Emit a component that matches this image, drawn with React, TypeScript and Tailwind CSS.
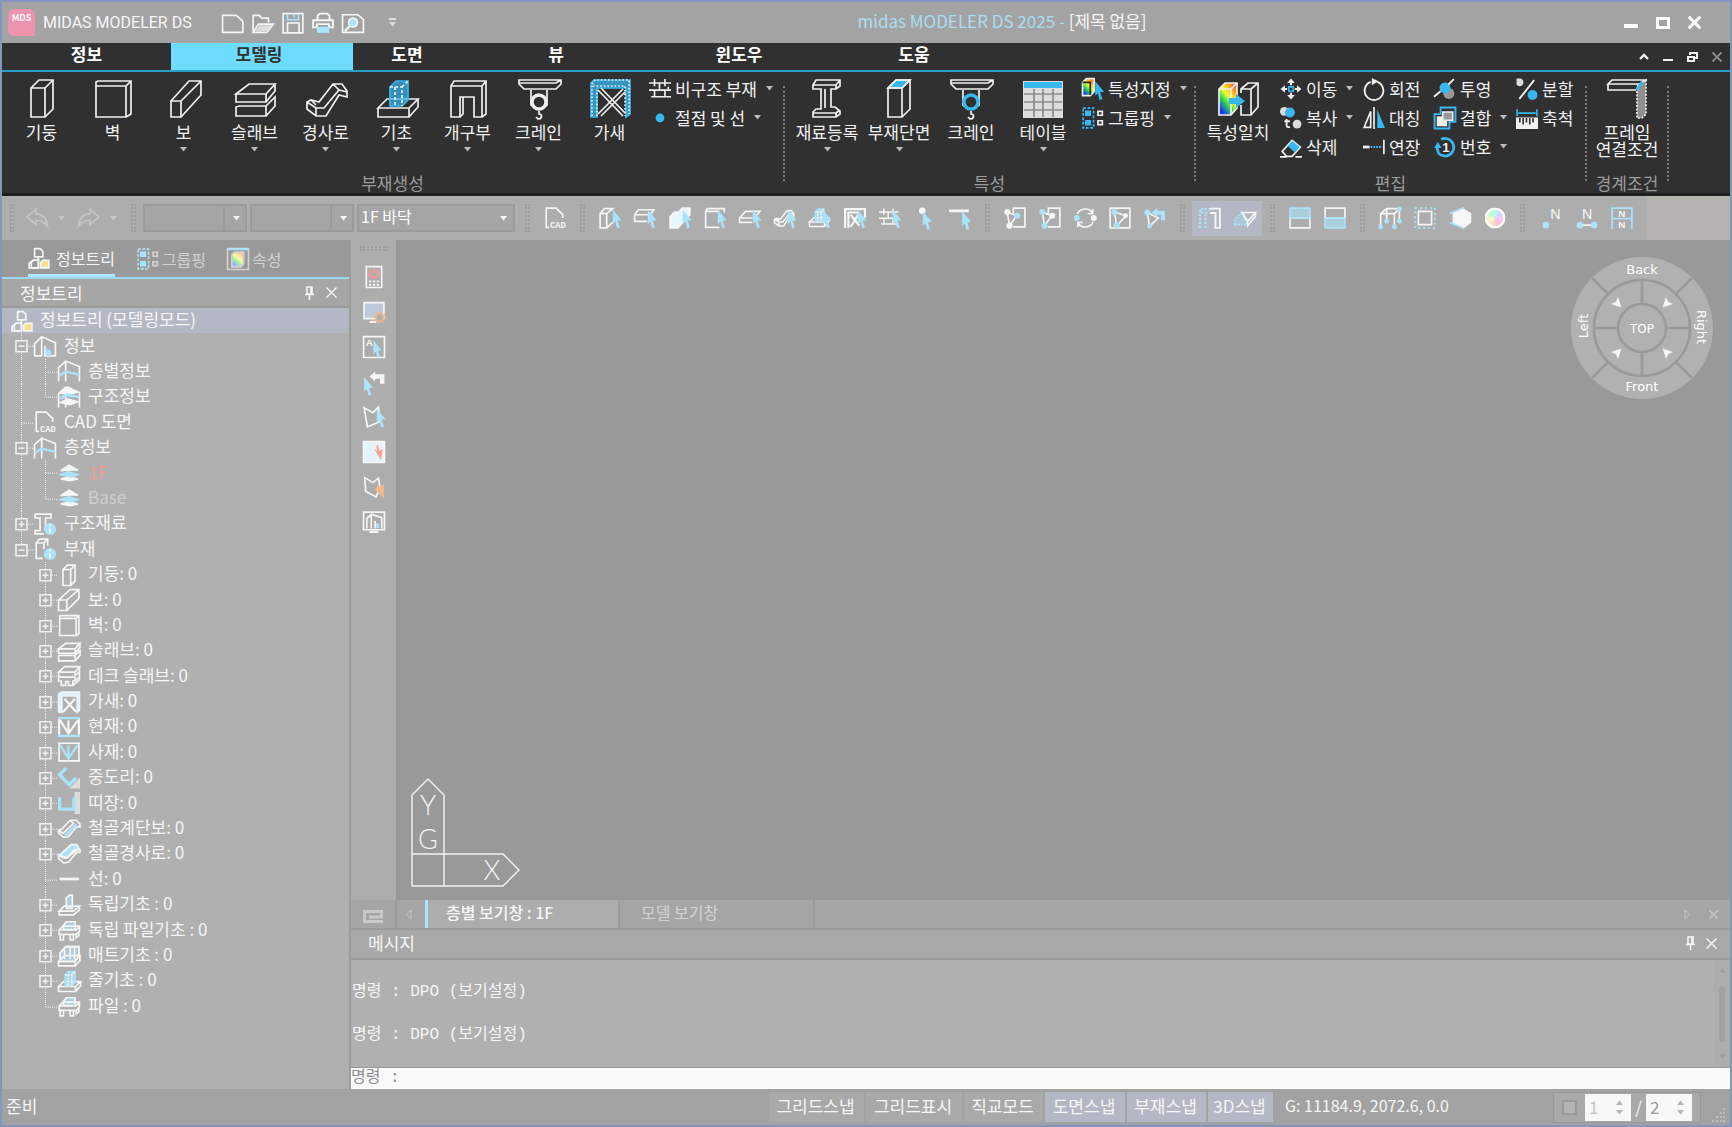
import { useState } from 'react';
import type { ReactNode } from 'react';

type Glyph = (a: string) => ReactNode;

const Rainbow = () => (
  <defs>
    <linearGradient id="rainbow" x1="1" y1="0" x2="0.3" y2="1">
      <stop offset="0" stopColor="#f33" />
      <stop offset="0.3" stopColor="#fb2" />
      <stop offset="0.5" stopColor="#ef3" />
      <stop offset="0.7" stopColor="#3d4" />
      <stop offset="1" stopColor="#13f" />
    </linearGradient>
  </defs>
);

// 40 x 40 member drawings, shared by the ribbon, the tree and the selection bar
const members: Record<string, Glyph> = {
  column: () => <path d="M9 10H23V39H9ZM9 10L17 2H31V31L23 39M23 10L31 2" />,
  wall: () => <path d="M3 8H33V39H3ZM3 8V4L5 3H38V36L33 39M33 8L38 3" />,
  beam: () => <path d="M7 23H17V39H7ZM7 23L25 3H37V17L17 39M17 23L37 3" />,
  beamWide: () => <path d="M1 20H16V39H1ZM1 20L22 1H38V17L16 39M16 20L38 1" />,
  slab: () => (
    <path d="M1 16L14 6H40L31 16ZM1 16V24H31V16M31 24L40 13V6M4 28L1 29V38H31V28H3M31 38L40 28V19L31 28" />
  ),
  deck: () => (
    <path d="M1 13L12 3H39L31 13ZM1 13V20L5 22H29L31 20V13M31 20L39 12V3M1 22V29H6V37H14V30H19V37H27V29H31V22M31 29L39 22V14M27 37L39 27V22" />
  ),
  ramp: () => (
    <path d="M1 24L5 22L13 24L27 6H36L41 13V19L33 17L20 38H10L1 31ZM1 24L10 30H18L33 12L41 14M27 6L33 12M10 30V38M5 22L10 27" />
  ),
  footing: (a) => (
    <>
      <path d="M1 30L10 21H41L32 30ZM1 30V39H32V30M32 39L41 29V21" />
      <path d="M13 9L19 3H31V22L25 28H13Z" fill={a} stroke={a} fillOpacity="0.7" />
      <path d="M13 9H25V28M25 9L31 3M18 9V27" strokeDasharray="3 2" />
    </>
  ),
  opening: () => <path d="M3 8L6 3H38V36L34 39H26V19H12V39H3ZM3 8H34V39M34 8L38 3M15 19V36L12 39" />,
  crane: () => (
    <>
      <path d="M0 2H42V6L37 11H5L0 6ZM0 5H37L42 2M12 12V27L17 31H23L28 27V12" />
      <circle cx="20" cy="24" r="7" strokeWidth="3.4" fill="#303030" />
      <path d="M20 33V36C24 36 23 41 19 41L17 39" />
    </>
  ),
  craneBlue: (a) => (
    <>
      <path d="M0 2H42V6L37 11H5L0 6ZM0 5H37L42 2M12 12V27L17 31H23L28 27V12" />
      <circle cx="20" cy="24" r="7" stroke={a} strokeWidth="3.4" fill="#303030" />
      <path d="M20 33V36C24 36 23 41 19 41L17 39" />
    </>
  ),
  brace: (a) => (
    <>
      <path d="M1 5L4 2H40V36L36 39V10H7V39H1Z" fill={a} stroke={a} fillOpacity="0.75" />
      <path d="M2 6L5 2H39V36M3 8H35V38M2 38V8M7 38V12" strokeDasharray="1.6 2" />
      <path d="M8 12L33 38M11 10L35 35M33 11L8 36M35 14L11 38" />
    </>
  ),
  bracePale: () => (
    <>
      <path d="M1 38V6L6 2H39V35L35 39V9H7V39Z" fill="#def1fa" stroke="#e9f6fc" />
      <path d="M9 38L14 33M33 38L29 33M12 14L31 36M31 14L11 36" strokeWidth="4" />
    </>
  ),
  steel: () => (
    <path d="M6 7L9 2H33V8L29 11H24V29H28L33 33V36L29 39H6V34L9 31H14V11H9L6 11ZM6 7H29V11M29 7L33 2M18 11V30M6 35H29V39M29 35L33 32" />
  ),
  section: (a) => (
    <>
      <path d="M9 10L17 2H31L23 10Z" fill={a} />
      <path d="M9 10H23V39H9ZM9 10L17 2H31V31L23 39M23 10L31 2" />
    </>
  ),
  table: (a) => (
    <>
      <rect x="0" y="3" width="40" height="37" fill="#ddd" stroke="none" />
      <rect x="1" y="4" width="38" height="6" fill={a} stroke="none" />
      <path d="M11 11V39M20 11V39M30 11V39M1 16H39M1 24H39M1 32H39" stroke="#8c8c8c" />
    </>
  ),
  match: (a) => (
    <>
      <Rainbow />
      <path d="M1 11L7 5H19V30L13 37H1Z" fill="url(#rainbow)" />
      <path d="M1 11H13V37M13 11L19 5M23 15V11L30 5H40V29L33 37H23V27M23 11H33V37M33 11L40 5" />
      <path d="M11 20H18V16L27 23L18 30V26H11Z" fill={a} stroke="none" />
    </>
  ),
  frame: (a) => (
    <>
      <path d="M1 6L5 2H38L33 6ZM1 6V12H29M33 6V12" />
      <path d="M30 8L39 2V36L35 40H30Z" fill="#8f8f8f" strokeDasharray="2 1.5" />
      <path d="M30 12L35 4" stroke={a} strokeWidth="3" />
    </>
  ),
  info: (a) => (
    <>
      <path d="M1 38V16L14 3L39 14V38H20V20M14 3V38M1 38H14" />
      <path d="M22 38V24L31 28V38Z" fill={a} stroke="none" />
    </>
  ),
  storey: (a) => (
    <>
      <path d="M1 39V14L14 2L39 12V39M14 2V39" />
      <path d="M1 29L14 21L39 27" stroke={a} strokeWidth="4.5" />
    </>
  ),
  structure: (a) => (
    <>
      <path d="M1 39V14L14 2L39 12V39M14 2V39" />
      <path d="M4 13L18 2L36 11L22 15ZM4 30L18 24L36 29L22 34Z" fill="currentColor" />
      <path d="M4 23L16 16L37 20" stroke={a} strokeWidth="5" />
    </>
  ),
  layers: (a) => (
    <>
      <path d="M5 16L20 6L36 15L24 14ZM5 31L20 27L36 31L22 34Z" fill="currentColor" />
      <path d="M5 23L19 18L36 23L24 27Z" fill={a} stroke={a} />
    </>
  ),
  steelInfo: (a) => (
    <>
      <path d="M2 2H31V9H21V28M2 2V9H11V32H2V38H18" />
      <circle cx="29" cy="29" r="11" fill={a} stroke="none" />
      <path d="M29 28V36M29 21V24" strokeWidth="3.5" />
    </>
  ),
  memberInfo: (a) => (
    <>
      <path d="M16 37H4V9H18V20M4 9L10 2H25V14M18 9L25 2" />
      <circle cx="29" cy="29" r="11" fill={a} stroke="none" />
      <path d="M29 28V36M29 21V24" strokeWidth="3.5" />
    </>
  ),
  chord: (a) => (
    <>
      <path d="M2 5V34M38 5V34M4 8L19 32L36 8M19 8V32" strokeWidth="4" />
      <path d="M0 4H40M0 36H40" stroke={a} strokeWidth="4" />
    </>
  ),
  diagonal: (a) => (
    <>
      <path d="M2 4V36M38 4V36M0 4H40M0 36H40" />
      <path d="M4 7L19 32L36 7M19 8V32" stroke={a} strokeWidth="4" />
    </>
  ),
  purlin: (a) => (
    <>
      <path d="M20 39L40 19V39Z" fill="#ddd" stroke="none" />
      <path d="M15 2L3 14L20 32L33 20" stroke={a} strokeWidth="6" />
    </>
  ),
  girt: (a) => (
    <>
      <path d="M30 0H40V40H30Z" fill="#ddd" stroke="none" />
      <path d="M3 10V31H29V10" stroke={a} strokeWidth="6" />
    </>
  ),
  stair: (a) => (
    <>
      <path d="M1 22L7 20L22 4H33L40 11V16H34L19 34L10 35L1 27ZM1 22L9 28L28 10L22 4" />
      <path d="M13 32L34 12" stroke={a} strokeWidth="6" />
    </>
  ),
  slope: (a) => (
    <>
      <path d="M3 22L24 3H34L38 10L16 27Z" fill={a} />
      <path d="M1 21L9 27H16L30 12H40V17H34L19 35L10 36L1 28Z" />
    </>
  ),
  line: () => <path d="M3 20H38" strokeWidth="5" />,
  pile: (a) => (
    <>
      <path d="M10 12L15 5H31V19H10Z" fill={a} fillOpacity="0.6" />
      <path d="M2 20L9 13H39V22L33 28H2ZM2 20H33L39 13M4 28V38H10V28M22 28V38H28V28M33 28V34L38 30V24" />
    </>
  ),
  mat: (a) => (
    <>
      <path d="M4 14L14 3H38V20L30 30H4Z" fill={a} fillOpacity="0.5" />
      <path d="M1 30L12 19H40L31 30ZM1 30V38H31V30M31 38L40 28V19M4 30V14L14 3H38V19M12 8V26M22 4V26M30 4V26" />
    </>
  ),
  padFooting: (a) => (
    <>
      <path d="M15 7L21 2H26V26H15Z" fill={a} fillOpacity="0.6" />
      <path d="M2 31L11 22H39L28 31ZM2 31V38H28L39 29V22" />
    </>
  ),
  cad: () => (
    <>
      <path d="M34 20V14L22 2H4V37H9" />
      <text x="11" y="39" fontSize="16" fontWeight="700" fill="currentColor" stroke="none" fontFamily="Liberation Mono, monospace">CAD</text>
    </>
  ),
  group: (a) => (
    <>
      <path d="M2 2H21V38H2Z" stroke={a} strokeDasharray="5 3" />
      <path d="M7 8H15V15H7ZM7 25H15V32H7Z" fill={a} stroke={a} />
      <path d="M29 8H37V15H29ZM29 25H37V32H29Z" />
    </>
  ),
  tree: () => (
    <>
      <path d="M12 3H22L27 8V18H12ZM19 18V24M10 24L6 28V38H19V24Z" />
      <path d="M23 38V28L27 24H38V38Z" fill="#ffe08a" />
      <path d="M2 38V30L9 24H19V38Z" />
    </>
  ),
  prop: (a) => (
    <>
      <Rainbow />
      <path d="M1 1H39V39H1Z" />
      <path d="M0 2H40" stroke={a} strokeWidth="4" />
      <path d="M9 12L14 8H30V29L25 34H9Z" fill="#fff" />
      <path d="M9 12L14 8H30V29L25 34H9Z" fill="url(#rainbow)" fillOpacity="0.45" />
    </>
  ),
  grid: () => <path d="M0 9H40M0 22H40M4 34H40M10 2V15M29 2V15M19 9V22M10 22V34M29 22V34M35 16V22" />,
};

const Cursor = ({ a }: { a: string }) => (
  <path d="M25 5V31L30 27L33 39L38 37L34 25L41 24Z" fill={a} stroke="none" />
);

const selectable = (name: string): Glyph => (a) => (
  <>
    <g transform="translate(0 1) scale(.88)">{members[name](a)}</g>
    <Cursor a={a} />
  </>
);

const tools: Record<string, Glyph> = {
  selColumn: (a) => (<><path d="M2 12H14V38H2ZM2 12L10 3H25L14 12M14 38L25 28" /><Cursor a={a} /></>),
  selBeam: (a) => (<><path d="M1 14L8 5H36L30 14M1 14V26H24M1 14H26" /><Cursor a={a} /></>),
  selSolid: (a) => (<><path d="M2 18L10 9H18L24 2H38V14L16 38H2Z" fill="#e6f6fc" /><Cursor a={a} /></>),
  selWall: (a) => (<><path d="M28 37H3V8L6 3H37V10M3 8H28" /><Cursor a={a} /></>),
  selSlab: (a) => (<><path d="M1 20L12 8H38L30 18M1 20V28H24M1 20H26" /><Cursor a={a} /></>),
  selRamp: selectable('ramp'),
  selFooting: selectable('footing'),
  selBrace: (a) => (<><path d="M2 38V4H38V20M8 38V10H28M12 14L28 34M26 14L12 36" strokeWidth="4" /><Cursor a={a} /></>),
  selGrid: selectable('grid'),
  selNode: (a) => (<><circle cx="15" cy="7" r="6" fill="currentColor" stroke="none" /><g transform="translate(-9 3)"><Cursor a={a} /></g></>),
  selLine: (a) => (<><path d="M0 7H36" strokeWidth="5" /><g transform="translate(-1 3)"><Cursor a={a} /></g></>),
  linkA: (a) => (<><path d="M17 12V2H38V36H16M6 9L10 34L23 16L6 9" /><circle cx="6" cy="9" r="4" fill="currentColor" /><circle cx="10" cy="34" r="4" fill="currentColor" /><circle cx="24" cy="16" r="4" fill={a} stroke={a} /></>),
  linkB: (a) => (<><path d="M17 12V2H38V36H16M6 9L10 34L23 16L6 9" /><circle cx="6" cy="9" r="4" fill={a} stroke={a} /><circle cx="10" cy="34" r="4" fill={a} stroke={a} /><circle cx="24" cy="16" r="4" fill="currentColor" /></>),
  rotate: (a) => (<><path d="M6 13A16 16 0 0 1 34 11M35 27A16 16 0 0 1 7 29M34 3V12H25M7 37V28H16" /><circle cx="5" cy="20" r="4" fill={a} stroke={a} /><circle cx="36" cy="20" r="4" fill="currentColor" /></>),
  boxLink: (a) => (<><path d="M2 2H38V38H2ZM10 9L14 34L31 16L10 9" /><circle cx="10" cy="9" r="4" fill={a} stroke={a} /><circle cx="14" cy="33" r="4" fill={a} stroke={a} /><circle cx="30" cy="16" r="3" fill="currentColor" /></>),
  undoLink: (a) => (<><path d="M6 10L10 35L26 20Z" /><circle cx="6" cy="10" r="4" fill={a} stroke={a} /><circle cx="10" cy="35" r="3" fill={a} stroke={a} /><path d="M14 10L24 2V7H38V24H31V14H24V19Z" fill={a} stroke="none" /></>),
  gate: (a) => (<><path d="M2 38V4H24M4 10H16M12 38V14" stroke={a} strokeDasharray="4 3" strokeWidth="4" /><path d="M20 3H38V38H30V11H20" strokeWidth="3.4" /></>),
  wedge: (a) => (<><path d="M1 32V24L14 9L24 32Z" stroke={a} fill={a} fillOpacity="0.3" strokeDasharray="4 2" /><path d="M14 10H39L25 26L14 10M39 10V17L25 34V26" /></>),
  topHalf: (a) => (<><path d="M2 20H38V38H2Z" /><rect x="2" y="2" width="36" height="18" fill={a} fillOpacity="0.6" stroke={a} /></>),
  bottomHalf: (a) => (<><path d="M2 2H38V20H2Z" /><rect x="2" y="20" width="36" height="18" fill={a} fillOpacity="0.6" stroke={a} /></>),
  nodes: (a) => (<><path d="M3 38V12L14 3H37V26M3 12H28L37 3M28 12V38M14 3V26" />{[[3, 36], [14, 26], [28, 36], [37, 26], [37, 4]].map(([x, y]) => <circle key={x + y * 50} cx={x} cy={y} r="3" fill={a} stroke={a} />)}</>),
  bounds: (a) => (<><path d="M8 8H32V32H8Z" /><path d="M2 2H38V38H2Z" stroke={a} strokeDasharray="3 6" strokeWidth="4" /></>),
  solid: (a) => (<><path d="M8 12L24 3L39 12V28L26 38L8 29Z" fill="currentColor" /><path d="M1 12L28 1M1 28L26 38" stroke={a} /></>),
  wheel: () => (
    <foreignObject x="1" y="1" width="38" height="38">
      <div className="h-full w-full rounded-full border-4 border-white bg-[conic-gradient(#bfe,#cdf,#ecf,#fbe,#fcc,#fec,#efc,#bfc,#bfe)]" />
    </foreignObject>
  ),
  n1: (a) => (<><circle cx="9" cy="33" r="6" fill={a} stroke="none" /><text x="17" y="21" fontSize="26" fill="currentColor" stroke="none" fontFamily="Liberation Sans, sans-serif">N</text></>),
  n2: (a) => (<><path d="M7 33H33" /><circle cx="7" cy="33" r="6" fill={a} stroke="none" /><circle cx="33" cy="33" r="6" fill={a} stroke="none" /><text x="11" y="21" fontSize="26" fill="currentColor" stroke="none" fontFamily="Liberation Sans, sans-serif">N</text></>),
  n3: (a) => (<><path d="M2 40V2H38V40M2 21H38" stroke={a} /><g fontSize="18" fontWeight="700" fill="currentColor" stroke="none" fontFamily="Liberation Sans, sans-serif"><text x="13" y="18">N</text><text x="13" y="38">N</text></g></>),
  undo: () => <path d="M2 18L18 4V12C32 13 38 22 39 35C33 26 27 24 18 24V32Z" />,
  redo: () => <path d="M38 18L22 4V12C8 13 2 22 1 35C7 26 13 24 22 24V32Z" />,
  remote: () => (<><path d="M6 1H34V39H6Z" /><path d="M14 8A8 8 0 1 0 26 8M20 4V13" stroke="#f49a9a" strokeWidth="4.4" /><path d="M11 28H30M11 34H30" strokeDasharray="4 3" strokeWidth="3.5" /></>),
  monitor: () => (<><path d="M2 3H38V32H2Z" fill="#c0c9dc" /><path d="M12 38H24" strokeWidth="4" /><circle cx="30" cy="30" r="7" stroke="#f2b48c" strokeWidth="3.5" fill="#b0b0b0" /><circle cx="30" cy="30" r="10" stroke="#f2b48c" strokeDasharray="3 4.8" strokeWidth="3" /></>),
  autoSel: (a) => (<><path d="M1 1H39V39H1Z" /><text x="5" y="19" fontSize="18" fontWeight="700" fill="currentColor" stroke="none" fontFamily="Liberation Sans, sans-serif">A</text><g transform="translate(-5 3) scale(.95)"><Cursor a={a} /></g></>),
  back: (a) => (<><g transform="translate(-23 6)"><Cursor a={a} /></g><path d="M12 10L22 1V6H39V23H31V14H22V19Z" fill="currentColor" stroke="none" /></>),
  polySel: (a) => (<><path d="M2 3L18 12L28 2L31 28L8 38Z" /><Cursor a={a} /></>),
  areaSel: () => (<><path d="M1 1H39V39H1Z" fill="#e4f4fc" /><path d="M20 14L33 35L36 14L30 18L27 7L24 9L26 18Z" fill="#fba48c" stroke="none" /></>),
  polyBack: () => (<><path d="M3 3L18 12L28 4L31 20L24 38L5 28Z" /><path d="M22 25L28 14V20L38 16V40Z" fill="#f7b988" stroke="none" /></>),
  screen: (a) => (<><path d="M1 2H39V34H1ZM7 32V14L15 6L34 12V32M15 6V32M22 32V18" /><path d="M24 22H29V31H24Z" fill={a} stroke="none" /><path d="M12 38H28" strokeWidth="4" /></>),
  assign: (a) => (<><Rainbow /><path d="M1 8L8 1H22V25L15 32H1Z" fill="url(#rainbow)" /><path d="M1 8H15V31" stroke="#222" /><g transform="translate(-1 1)"><Cursor a={a} /></g></>),
  dot: (a) => <circle cx="20" cy="20" r="8" fill={a} stroke="none" />,
  move: (a) => (<><path d="M20 1L27 9H13ZM20 39L27 31H13ZM1 20L9 13V27ZM39 20L31 13V27Z" fill="currentColor" stroke="none" /><path d="M20 8V13M20 27V32M8 20H13M27 20H32" strokeWidth="4" /><path d="M16 16H24V24H16Z" stroke={a} strokeWidth="3" /></>),
  copy: (a) => (<><circle cx="8" cy="8" r="8" fill="#ddd" stroke="none" /><circle cx="18" cy="10" r="9" fill={a} stroke="none" /><circle cx="31" cy="31" r="8" fill="#ddd" stroke="none" /><path d="M12 22V33C12 37 16 37 18 36M8 26H18" strokeWidth="3.4" /></>),
  erase: (a) => (<><path d="M4 28L22 8L37 20L22 37H12Z" /><path d="M14 18L22 9L36 20L27 30Z" fill={a} stroke="none" /><path d="M0 38H12M28 38H40" /></>),
  turn: () => (<><path d="M14 7A17 17 0 1 0 26 7" strokeWidth="3.4" /><path d="M16 0L28 6L16 13Z" fill="currentColor" stroke="none" /></>),
  mirror: (a) => (<><path d="M2 37H14V8ZM20 0V40" /><path d="M26 5V38H40Z" fill={a} stroke="none" /></>),
  extend: (a) => (<><path d="M0 20H12" strokeWidth="5" /><path d="M14 20H35" stroke={a} strokeWidth="4" strokeDasharray="3 2" /><path d="M38 7V33" /></>),
  project: (a) => (<><circle cx="27" cy="28" r="10" fill="#9a9a9a" stroke="none" /><circle cx="20" cy="18" r="10" fill={a} stroke="none" /><path d="M0 34L12 24M26 12L36 2" strokeWidth="3.4" /></>),
  merge: (a) => (<><path d="M12 1H39V27H28V39H1V13H12Z" stroke={a} strokeWidth="3.4" /><path d="M5 17H24V35H5Z" fill="#eee" stroke="none" /><path d="M16 9H34V24H16Z" fill="#999" stroke="#eee" /></>),
  number: (a) => (<><path d="M13 6A16 16 0 1 1 8 31M8 31L5 20" stroke={a} strokeWidth="5" /><path d="M0 22L7 11L14 22Z" fill={a} stroke="none" /><text x="15" y="29" fontSize="24" fontWeight="700" fill="currentColor" stroke="none" fontFamily="Liberation Sans, sans-serif">1</text></>),
  split: (a) => (<><path d="M1 1H8A7 7 0 1 1 1 12Z" fill="#ddd" stroke="none" /><path d="M6 38L33 4" strokeWidth="3.4" /><circle cx="30" cy="31" r="9" fill={a} stroke="none" /></>),
  ruler: (a) => (<><path d="M0 19H40V40H0Z" fill="currentColor" stroke="none" /><path d="M7 20V28M13 20V32M19 20V28M25 20V32M31 20V28" stroke="#333" /><path d="M2 4V17M38 4V17M4 11H36" stroke={a} strokeWidth="3" /></>),
  newFile: () => <path d="M1 6H26L38 17V37H1Z" />,
  openFile: () => (<><path d="M2 37V6H13L18 11H30V19M2 37L12 22H39L27 37Z" /><path d="M14 24H37L27 35H6Z" fill="#ddd" stroke="none" /></>),
  saveFile: (a) => (<><path d="M2 3H38V38H2Z M10 38V20H31V38" /><path d="M10 4V14H30V4M22 5V10" stroke={a} /></>),
  print: (a) => (<><path d="M10 13V7L14 3H28L32 7V13M2 15H38V28H31V22H9V28H2Z" strokeWidth="3.4" /><path d="M9 27H31V38H9Z" fill={a} stroke="none" /></>),
  preview: (a) => (<><path d="M1 5H29L39 14V37H1Z" /><circle cx="20" cy="19" r="8" fill={a} /><path d="M14 26L5 35" strokeWidth="4" /></>),
};

function Icon({ name, size = 22, accent = '#aae4fb' }: { name: string; size?: number; accent?: string }) {
  const draw = members[name] ?? tools[name];
  return (
    <svg
      aria-hidden="true"
      width={size}
      height={size}
      viewBox="0 0 40 40"
      fill="none"
      stroke="currentColor"
      strokeWidth={size > 30 ? 1.7 : 3}
      className="shrink-0 overflow-visible"
    >
      {draw(accent)}
    </svg>
  );
}

const Caret = () => (
  <svg aria-hidden="true" width="7" height="5" viewBox="0 0 7 5" className="shrink-0 fill-current">
    <path d="M0 0H7L3.5 4.5Z" />
  </svg>
);

const RIBBON_ACCENT = '#38b8f2';

function BigButton({ icon, label, caret }: { icon: string; label: string; caret?: boolean }) {
  return (
    <button className="flex flex-col items-center pt-[6px]">
      <Icon name={icon} size={40} accent={RIBBON_ACCENT} />
      <span className="mt-[5px] whitespace-pre-line leading-[17px]">{label}</span>
      {caret && <span className="mt-[7px] text-[#bdbdbd]"><Caret /></span>}
    </button>
  );
}

function SmallButton({ icon, label, caret }: { icon: string; label: string; caret?: boolean }) {
  return (
    <button className="flex h-[29px] items-center whitespace-nowrap">
      <Icon name={icon} accent={RIBBON_ACCENT} />
      <span className="ml-1 leading-5">{label}</span>
      {caret && <span className="ml-[9px] text-[#bdbdbd]"><Caret /></span>}
    </button>
  );
}

function RibbonGroup({ title, className, children }: { title: string; className: string; children: ReactNode }) {
  return (
    <>
      <section className={`flex shrink-0 flex-col ${className}`}>
        <div className="flex flex-1">{children}</div>
        <h2 className="text-center leading-5 text-[#9c9c9c]">{title}</h2>
      </section>
      <div className="mt-[14px] mb-3 border-l-2 border-dotted border-[#7c7c7c]" />
    </>
  );
}

const ribbonTabs = [
  { label: '정보', width: 'w-[169px]' },
  { label: '모델링', width: 'w-[182px]' },
  { label: '도면', width: 'w-[108px]' },
  { label: '뷰', width: 'w-[190px]' },
  { label: '윈도우', width: 'w-[176px]' },
  { label: '도움', width: 'w-[174px]' },
];

const memberButtons = [
  { icon: 'column', label: '기둥' },
  { icon: 'wall', label: '벽' },
  { icon: 'beam', label: '보', caret: true },
  { icon: 'slab', label: '슬래브', caret: true },
  { icon: 'ramp', label: '경사로', caret: true },
  { icon: 'footing', label: '기초', caret: true },
  { icon: 'opening', label: '개구부', caret: true },
  { icon: 'crane', label: '크레인', caret: true },
  { icon: 'brace', label: '가새' },
];

const propertyButtons = [
  { icon: 'steel', label: '재료등록', caret: true },
  { icon: 'section', label: '부재단면', caret: true },
  { icon: 'craneBlue', label: '크레인' },
  { icon: 'table', label: '테이블', caret: true },
];

type Guide = 'none' | 'line' | 'tee' | 'end' | 'plus' | 'minus' | 'minusEnd';

interface TreeItem {
  label: string;
  icon: string;
  guides: Guide[];
  color?: string;
}

const treeItems: TreeItem[] = [
  { label: '정보', icon: 'info', guides: ['minus'] },
  { label: '층별정보', icon: 'storey', guides: ['line', 'tee'] },
  { label: '구조정보', icon: 'structure', guides: ['line', 'end'] },
  { label: 'CAD 도면', icon: 'cad', guides: ['tee'] },
  { label: '층정보', icon: 'storey', guides: ['minus'] },
  { label: '1F', icon: 'layers', guides: ['line', 'tee'], color: 'text-[#f59a8c]' },
  { label: 'Base', icon: 'layers', guides: ['line', 'end'], color: 'text-[#cfcfcf]' },
  { label: '구조재료', icon: 'steelInfo', guides: ['plus'] },
  { label: '부재', icon: 'memberInfo', guides: ['minusEnd'] },
  { label: '기둥: 0', icon: 'column', guides: ['none', 'plus'] },
  { label: '보: 0', icon: 'beamWide', guides: ['none', 'plus'] },
  { label: '벽: 0', icon: 'wall', guides: ['none', 'plus'] },
  { label: '슬래브: 0', icon: 'slab', guides: ['none', 'plus'] },
  { label: '데크 슬래브: 0', icon: 'deck', guides: ['none', 'plus'] },
  { label: '가새: 0', icon: 'bracePale', guides: ['none', 'plus'] },
  { label: '현재: 0', icon: 'chord', guides: ['none', 'plus'] },
  { label: '사재: 0', icon: 'diagonal', guides: ['none', 'plus'] },
  { label: '중도리: 0', icon: 'purlin', guides: ['none', 'plus'] },
  { label: '띠장: 0', icon: 'girt', guides: ['none', 'plus'] },
  { label: '철골계단보: 0', icon: 'stair', guides: ['none', 'plus'] },
  { label: '철골경사로: 0', icon: 'slope', guides: ['none', 'plus'] },
  { label: '선: 0', icon: 'line', guides: ['none', 'tee'] },
  { label: '독립기초 : 0', icon: 'padFooting', guides: ['none', 'plus'] },
  { label: '독립 파일기초 : 0', icon: 'pile', guides: ['none', 'plus'] },
  { label: '매트기초 : 0', icon: 'mat', guides: ['none', 'plus'] },
  { label: '줄기초 : 0', icon: 'footing', guides: ['none', 'plus'] },
  { label: '파일 : 0', icon: 'pile', guides: ['none', 'end'] },
];

function GuideCell({ kind }: { kind: Guide }) {
  const boxed = kind === 'plus' || kind === 'minus' || kind === 'minusEnd';
  const stops = kind === 'end' || kind === 'minusEnd';
  const art = (
    <svg aria-hidden="true" className="block h-full w-6 overflow-visible" stroke="#f0f0f0" fill="none">
      {kind !== 'none' && (
        <line x1="11.5" y1="0" x2="11.5" y2={stops ? '50%' : '100%'} strokeDasharray="1 1" />
      )}
      {kind !== 'none' && kind !== 'line' && (
        <svg y="50%" className="overflow-visible">
          <path d="M12 .5H24" strokeDasharray="1 1" />
          {boxed && <path d="M6 -5H17V6H6Z" fill="#b0b0b0" strokeWidth="1.6" />}
          {boxed && <path d={kind === 'plus' ? 'M8.5 .5H14.5M11.5 -2.5V3.5' : 'M8.5 .5H14.5'} strokeWidth="1.6" />}
        </svg>
      )}
    </svg>
  );
  return boxed ? <button aria-label="확장" className="h-full">{art}</button> : art;
}

const Grip = () => (
  <div className="flex w-5 shrink-0 justify-center">
    <div className="h-7 w-[5px] border-x-2 border-dotted border-[#9c9c9c]" />
  </div>
);

function ToolGroup({ icons, active }: { icons: string[]; active?: boolean }) {
  return (
    <div className={`flex h-[35px] ${active ? 'bg-[#b4b8c5]' : ''}`}>
      {icons.map((name) => (
        <button key={name} aria-label={name} className="flex w-[35px] items-center justify-center">
          <Icon name={name} />
        </button>
      ))}
    </div>
  );
}

function Combo({ label, value, className, divided }: { label: string; value: string; className: string; divided?: boolean }) {
  return (
    <div className={`relative h-7 ${className}`}>
      <select
        aria-label={label}
        className="h-full w-full appearance-none border-2 border-[#9b9b9b] bg-[#a5a5a5] pb-1 pl-[2px] text-base leading-5 text-white"
      >
        <option>{value}</option>
      </select>
      <span
        className={`pointer-events-none absolute inset-y-0 right-0 flex w-6 items-center justify-center ${
          divided ? 'border-l-2 border-[#9b9b9b]' : ''
        }`}
      >
        <Caret />
      </span>
    </div>
  );
}

const Pin = () => (
  <svg aria-hidden="true" width="11" height="14" viewBox="0 0 11 14" fill="none" stroke="currentColor" strokeWidth="1.6">
    <path d="M3 1H8V8H3ZM1 8.5H10M5.5 9V14M7 1V8" />
  </svg>
);

const Cross = ({ size = 11, width = 1.4 }: { size?: number; width?: number }) => (
  <svg aria-hidden="true" width={size} height={size} viewBox="0 0 11 11" fill="none" stroke="currentColor" strokeWidth={width}>
    <path d="M.5 .5L10.5 10.5M10.5 .5L.5 10.5" />
  </svg>
);

function Compass() {
  return (
    <svg aria-label="뷰 큐브" width="142" height="142" viewBox="-71 -71 142 142" className="absolute top-[17px] right-[17px]">
      <circle r="71" fill="#b1b1b1" />
      <g fill="none" stroke="#999" strokeWidth="2.5">
        <circle r="48" />
        <circle r="24" />
        <path d="M0 -48V-24M0 24V48M-48 0H-24M24 0H48M-50 -50L-34 -34M50 -50L34 -34M-50 50L-34 34M50 50L34 34" />
      </g>
      <g fill="#f4f4f4">
        {[45, 135, 225, 315].map((deg) => (
          <path key={deg} d="M0 -29L5 -39L0 -37L-5 -39Z" transform={`rotate(${deg})`} />
        ))}
      </g>
      <g fill="#fff" fontSize="13" textAnchor="middle" fontFamily="DejaVu Sans, sans-serif">
        <text y="-54">Back</text>
        <text y="63">Front</text>
        <text y="5" fontSize="12">TOP</text>
        <text transform="translate(-54 -2) rotate(-90)">Left</text>
        <text transform="translate(55 -1) rotate(90)">Right</text>
      </g>
    </svg>
  );
}

function AxisMark() {
  return (
    <svg aria-hidden="true" width="109" height="109" viewBox="0 0 109 109" className="absolute bottom-[13px] left-[15px]" fill="none" stroke="#f4f4f4" strokeWidth="1.4">
      <path d="M1 108V17L17 1L33 17V108M1 76H92L108 92L92 108H1" />
      <g fill="#f4f4f4" stroke="none" textAnchor="middle" fontFamily="Lato, sans-serif" fontWeight="300" fontSize="27">
        <text x="17" y="37">Y</text>
        <text x="17" y="71">G</text>
        <text x="81" y="102">X</text>
      </g>
    </svg>
  );
}

const snaps = [
  { label: '그리드스냅', on: false, width: 'w-[95px]' },
  { label: '그리드표시', on: false, width: 'w-[96px]' },
  { label: '직교모드', on: false, width: 'w-[79px]' },
  { label: '도면스냅', on: true, width: 'w-[80px]' },
  { label: '부재스냅', on: true, width: 'w-[79px]' },
  { label: '3D스냅', on: true, width: 'w-[65px]' },
];

function PageBox({ label, value, disabled }: { label: string; value: number; disabled?: boolean }) {
  return (
    <div className="flex h-[27px] w-[46px] items-center bg-[#f8f8f8] text-[#999]">
      <input
        aria-label={label}
        defaultValue={value}
        disabled={disabled}
        className={`w-[31px] bg-transparent pl-1 outline-none ${disabled ? 'text-[#c4c4c4]' : ''}`}
      />
      <span className="flex flex-col gap-[5px] text-[#b4b4b4]">
        <span className="rotate-180"><Caret /></span>
        <Caret />
      </span>
    </div>
  );
}

export default function App() {
  const [tab, setTab] = useState('모델링');

  return (
    <div className="flex min-h-screen flex-col border-2 border-[#8296be] bg-[#a3a3a3] font-['Noto_Sans_CJK_KR',sans-serif] text-[17px] leading-5 text-[#f6f6f6]">
      <header className="flex h-[41px] items-center bg-[#a3a3a3]">
        <div className="flex w-[400px] items-center">
          <div className="ml-[6px] flex h-[27px] w-[27px] items-start justify-center rounded-md rounded-br-none bg-[#ec93ad] pt-[3px] text-[9px] leading-3 font-bold">
            MDS
          </div>
          <span className="ml-2 w-[179px] font-['Roboto',sans-serif] text-base">MIDAS MODELER DS</span>
          <div className="flex gap-[8px]">
            {['newFile', 'openFile', 'saveFile', 'print', 'preview'].map((name) => (
              <button key={name} aria-label={name}><Icon name={name} /></button>
            ))}
          </div>
          <button aria-label="빠른 실행" className="ml-[25px] flex flex-col items-center gap-[2px] text-[#dedede]">
            <span className="h-[2px] w-[7px] bg-current" />
            <Caret />
          </button>
        </div>
        <h1 className="flex-1 pb-1 text-center">
          <span className="text-[#a9def2]">midas MODELER DS 2025 - </span>[제목 없음]
        </h1>
        <div className="flex w-[128px] items-center gap-[18px] pl-[22px]">
          <button aria-label="최소화" className="mt-[6px] h-1 w-[14px] bg-white" />
          <button aria-label="최대화" className="h-3 w-[14px] border-[3px] border-white" />
          <button aria-label="닫기"><Cross size={13} width={2.8} /></button>
        </div>
      </header>

      <div className="bg-[#303030] text-[#f0f0f0]">
        <nav className="flex h-[29px] border-b-2 border-[#2a9dc4]">
          {ribbonTabs.map(({ label, width }) => (
            <button
              key={label}
              onClick={() => setTab(label)}
              className={`${width} pb-[6px] font-bold ${tab === label ? 'bg-[#6edcff] pr-[6px] text-[#303030]' : 'text-white'}`}
            >
              {label}
            </button>
          ))}
          <div className="ml-auto flex items-center gap-[14px] pr-2">
            <button aria-label="리본 접기">
              <svg width="10" height="7" viewBox="0 0 10 7" fill="none" stroke="currentColor" strokeWidth="2.4"><path d="M1 6L5 2L9 6" /></svg>
            </button>
            <button aria-label="창 최소화" className="mt-[6px] h-[2px] w-[10px] bg-current" />
            <button aria-label="창 복원">
              <svg width="11" height="10" viewBox="0 0 11 10" fill="none" stroke="currentColor" strokeWidth="2"><path d="M1 5H7V9H1ZM3 3V1H10V6H8" /></svg>
            </button>
            <button aria-label="창 닫기" className="text-[#8f8f8f]"><Cross size={10} width={2} /></button>
          </div>
        </nav>

        <div className="flex h-[124px] border-b-[3px] border-[#1d1d1d]">
          <RibbonGroup title="부재생성" className="w-[781px]">
            <div className="ml-1 grid grid-cols-[repeat(9,71px)]">
              {memberButtons.map((b) => <BigButton key={b.label} {...b} />)}
            </div>
            <div className="ml-1 flex flex-col pt-[2px]">
              <SmallButton icon="grid" label="비구조 부재" caret />
              <SmallButton icon="dot" label="절점 및 선" caret />
            </div>
          </RibbonGroup>
          <RibbonGroup title="특성" className="w-[409px]">
            <div className="ml-[6px] grid grid-cols-[repeat(4,72px)]">
              {propertyButtons.map((b) => <BigButton key={b.label} {...b} />)}
            </div>
            <div className="ml-[3px] flex flex-col pt-[2px]">
              <SmallButton icon="assign" label="특성지정" caret />
              <SmallButton icon="group" label="그룹핑" caret />
            </div>
          </RibbonGroup>
          <RibbonGroup title="편집" className="w-[389px]">
            <div className="ml-[6px] grid grid-cols-[72px]">
              <BigButton icon="match" label="특성일치" />
            </div>
            <div className="ml-[6px] grid grid-cols-[83px_71px_82px_60px] grid-rows-[29px_29px_29px] pt-[2px]">
              <SmallButton icon="move" label="이동" caret />
              <SmallButton icon="turn" label="회전" />
              <SmallButton icon="project" label="투영" />
              <SmallButton icon="split" label="분할" />
              <SmallButton icon="copy" label="복사" caret />
              <SmallButton icon="mirror" label="대칭" />
              <SmallButton icon="merge" label="결합" caret />
              <SmallButton icon="ruler" label="축척" />
              <SmallButton icon="erase" label="삭제" />
              <SmallButton icon="extend" label="연장" />
              <SmallButton icon="number" label="번호" caret />
            </div>
          </RibbonGroup>
          <RibbonGroup title="경계조건" className="w-[80px]">
            <div className="mx-auto">
              <BigButton icon="frame" label={'프레임\n연결조건'} />
            </div>
          </RibbonGroup>
        </div>
      </div>

      <div className="flex h-[44px] bg-[#b5b3b0]">
        <div className="flex items-center bg-[#adadad] pr-2">
          <div className="w-3 overflow-hidden"><Grip /></div>
          <div className="flex items-center gap-[13px] pl-3 text-[#c6c6c6]">
            <div className="flex items-center gap-[10px]">
              <button aria-label="실행 취소"><Icon name="undo" /></button>
              <Caret />
            </div>
            <div className="flex items-center gap-[10px]">
              <button aria-label="다시 실행"><Icon name="redo" /></button>
              <Caret />
            </div>
          </div>
          <div className="ml-[6px]"><Grip /></div>
          <div className="flex gap-[3px]">
            <Combo label="그룹" value="" className="w-[104px]" divided />
            <Combo label="필터" value="" className="w-[104px]" divided />
            <Combo label="층" value="1F 바닥" className="w-[158px]" />
          </div>
          <div className="ml-[2px]"><Grip /></div>
          <ToolGroup icons={['cad']} />
          <Grip />
          <ToolGroup
            icons={['selColumn', 'selBeam', 'selSolid', 'selWall', 'selSlab', 'selRamp', 'selFooting', 'selBrace', 'selGrid', 'selNode', 'selLine']}
          />
          <Grip />
          <ToolGroup icons={['linkA', 'linkB', 'rotate', 'boxLink', 'undoLink']} />
          <Grip />
          <ToolGroup icons={['gate', 'wedge']} active />
          <Grip />
          <ToolGroup icons={['topHalf', 'bottomHalf']} />
          <Grip />
          <ToolGroup icons={['nodes', 'bounds', 'solid', 'wheel']} />
          <div className="mr-[2px]"><Grip /></div>
          <ToolGroup icons={['n1', 'n2', 'n3']} />
        </div>
      </div>

      <main className="flex flex-1">
        <aside className="flex w-[349px] shrink-0 flex-col border-r-2 border-[#9b9b9b] bg-[#b0b0b0]">
          <div className="flex h-[39px] items-center border-b-2 border-[#9fd8ee] bg-[#999] text-base">
            <div className="w-[18px] overflow-hidden"><Grip /></div>
            <button className="ml-2 flex h-full items-center border-b-[3px] border-[#a9e6ff] pt-[2px]">
              <Icon name="tree" /><span className="ml-[6px]">정보트리</span>
            </button>
            <button className="ml-[22px] flex items-center text-[#d2d2d2]">
              <Icon name="group" /><span className="ml-[3px]">그룹핑</span>
            </button>
            <button className="ml-[21px] flex items-center text-[#d2d2d2]">
              <Icon name="prop" /><span className="ml-[3px]">속성</span>
            </button>
          </div>
          <div className="flex h-[29px] items-center border-b-2 border-[#9b9b9b] bg-[#a6a6a6] pr-3 pl-[18px]">
            <h2 className="flex-1">정보트리</h2>
            <button aria-label="고정"><Pin /></button>
            <button aria-label="닫기" className="ml-[11px]"><Cross /></button>
          </div>
          <div className="grid h-[711px] auto-rows-fr">
            <div className="flex items-center bg-[#b4b8c5] pl-[9px]">
              <Icon name="tree" />
              <span className="ml-[7px] pb-[3px]">정보트리 (모델링모드)</span>
            </div>
            {treeItems.map(({ label, icon, guides, color }) => (
              <div key={label} className="flex min-h-0 items-center pl-2">
                {guides.map((g, i) => <GuideCell key={i} kind={g} />)}
                <Icon name={icon} />
                <span className={`ml-2 pb-[3px] ${color ?? ''}`}>{label}</span>
              </div>
            ))}
          </div>
        </aside>

        <div className="flex min-w-0 flex-1 flex-col">
          <div className="flex flex-1">
            <div className="flex w-[45px] flex-col items-center bg-[#adadad] pt-[6px]">
              <div className="mb-[8px] h-[5px] w-7 border-y-2 border-dotted border-[#9c9c9c]" />
              {['remote', 'monitor', 'autoSel', 'back', 'polySel', 'areaSel', 'polyBack', 'screen'].map((name) => (
                <button key={name} aria-label={name} className="flex h-[35px] w-[35px] items-center justify-center">
                  <Icon name={name} />
                </button>
              ))}
            </div>
            <div className="relative flex-1 bg-[#999]">
              <Compass />
              <AxisMark />
            </div>
          </div>

          <div className="flex h-[30px] border-b-2 border-[#9b9b9b] bg-[#a5a5a5] text-base">
            <button aria-label="목록" className="flex w-[46px] items-center justify-center border-r-2 border-[#9b9b9b] pt-1 text-[#c9c9c9]">
              <svg width="20" height="13" viewBox="0 0 20 13" fill="none" stroke="currentColor" strokeWidth="3"><path d="M20 11.5H1.5V1.5H18.5V7H6" /></svg>
            </button>
            <button aria-label="이전" className="flex w-[28px] items-center justify-center pr-[6px] text-[#c4c4c4]">
              <svg width="7" height="11" viewBox="0 0 7 11" fill="none" stroke="currentColor"><path d="M6 1V10L1 5.5Z" /></svg>
            </button>
            <button className="flex w-[195px] items-center border-r-2 border-l-[3px] border-r-[#9b9b9b] border-l-[#a9e6ff] bg-[#adadad] pb-1 pl-[18px] font-medium">
              층별 보기창 : 1F
            </button>
            <button className="flex w-[195px] items-center border-r-2 border-[#9b9b9b] pb-1 pl-[21px] text-[#d4d4d4]">모델 보기창</button>
            <div className="ml-auto flex items-center gap-[18px] pr-3 text-[#c4c4c4]">
              <button aria-label="다음">
                <svg width="7" height="11" viewBox="0 0 7 11" fill="none" stroke="currentColor"><path d="M1 1V10L6 5.5Z" /></svg>
              </button>
              <button aria-label="보기창 닫기"><Cross size={9} width={2} /></button>
            </div>
          </div>

          <div className="flex h-[30px] items-center border-b-2 border-[#9b9b9b] bg-[#a8a8a8] pr-[13px] pb-[2px] pl-[17px]">
            <h2 className="flex-1">메시지</h2>
            <button aria-label="메시지 고정"><Pin /></button>
            <button aria-label="메시지 닫기" className="ml-[10px]"><Cross /></button>
          </div>
          <div className="flex h-[108px] border-b border-[#999] bg-[#b0b0b0]">
            <div className="flex-1 pt-[10px] pl-[1px] font-['Liberation_Mono','Noto_Sans_CJK_KR',monospace] text-base">
              <p className="mt-3 leading-5">명령 : DPO (보기설정)</p>
              <p className="mt-[23px] leading-5">명령 : DPO (보기설정)</p>
            </div>
            <div className="flex w-4 flex-col items-center justify-between bg-[#adadad] py-2 text-[#9f9f9f]">
              <span className="rotate-180"><Caret /></span>
              <span className="h-14 w-[6px] rounded bg-[#a2a2a2]" />
              <Caret />
            </div>
          </div>
          <label className="flex h-[21px] items-start bg-[#fafafa] font-['Liberation_Mono','Noto_Sans_CJK_KR',monospace] text-base leading-5 text-[#8c8c8c]">
            명령 :
            <input className="ml-2 min-w-0 flex-1 bg-transparent outline-none" />
          </label>
        </div>
      </main>

      <footer className="flex h-[36px] items-center bg-[#a2a2a2]">
        <span className="pb-[3px] pl-1">준비</span>
        <div className="ml-auto flex h-[30px] gap-[2px]">
          {snaps.map(({ label, on, width }) => (
            <button key={label} className={`${width} pr-[6px] pb-[2px] pl-1 text-center whitespace-nowrap ${on ? 'bg-[#b4b8c5]' : 'bg-[#a9a9a9]'}`}>{label}</button>
          ))}
        </div>
        <output className="w-[280px] pb-[5px] pl-3 text-base">G: 11184.9, 2072.6, 0.0</output>
        <div className="flex h-[31px] items-center border border-[#999] bg-[#a9a9a9] px-2">
          <input type="checkbox" aria-label="분할 사용" className="mr-2 h-[15px] w-[15px] appearance-none border-2 border-[#999] bg-[#b4b4b4]" />
          <PageBox label="현재 페이지" value={1} disabled />
          <span className="w-[15px] text-center">/</span>
          <PageBox label="전체 페이지" value={2} />
        </div>
        <svg aria-hidden="true" width="14" height="14" viewBox="0 0 14 14" className="mt-4 mr-1 ml-[11px]" fill="#bcbcbc">
          <path d="M11 0h2v2h-2zM8 4h2v2H8zM11 4h2v2h-2zM4 8h2v2H4zM8 8h2v2H8zM11 8h2v2h-2zM0 12h2v2H0zM4 12h2v2H4zM8 12h2v2H8zM11 12h2v2h-2z" />
        </svg>
      </footer>
    </div>
  );
}
